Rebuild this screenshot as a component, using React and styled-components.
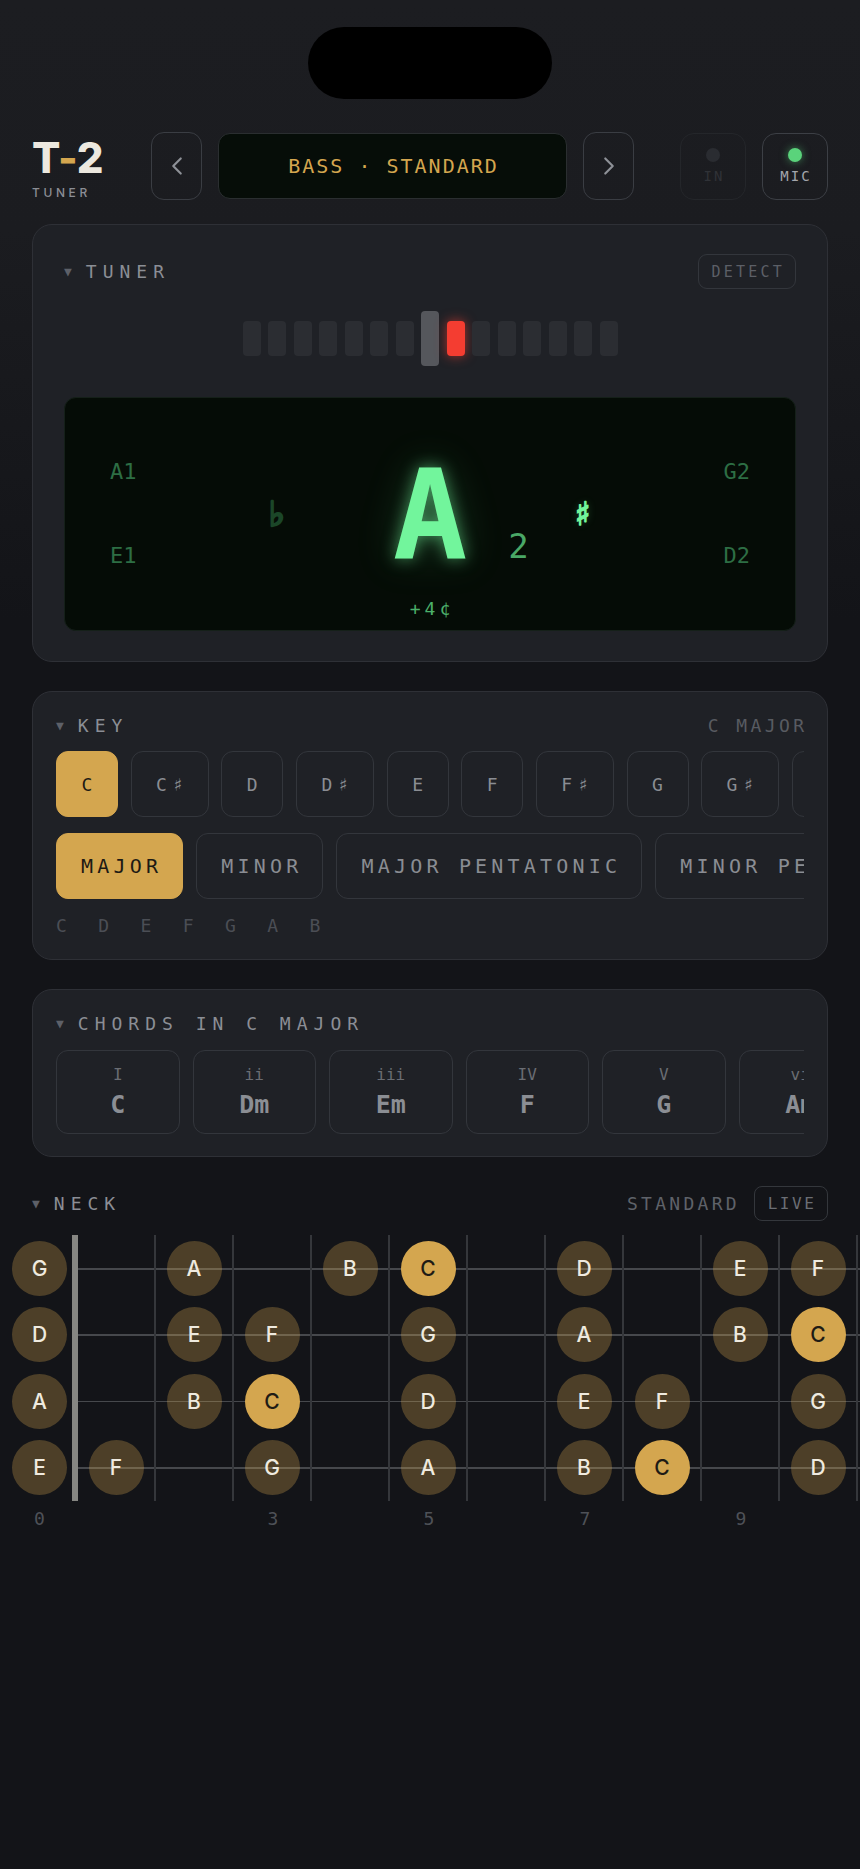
import React from 'react';
import styled, { createGlobalStyle } from 'styled-components';
import { ChevronLeft, ChevronRight } from 'lucide-react';

const MONO = '"DejaVu Sans Mono", "Liberation Mono", monospace';
const SANS = 'Inter, "Noto Sans", sans-serif';
const SYMBOL = '"DejaVu Sans", "Noto Sans", sans-serif';
const GOLD = '#d4a64f';

const GlobalStyle = createGlobalStyle`
  html, body { margin: 0; padding: 0; background: #131418; }
  * { box-sizing: border-box; }
  body { font-family: ${MONO}; color: #8b8e95; }
`;

const Page = styled.div`
  width: 860px;
  min-height: 1869px;
  padding-top: 27px;
  overflow: hidden;
  background: linear-gradient(180deg, #1c1d21 0px, #1b1c20 230px, #131418 620px, #131418 100%);
`;

const Notch = styled.div`
  width: 244px;
  height: 72px;
  margin: 0 auto;
  border-radius: 36px;
  background: #000;
`;

const Header = styled.header`
  display: flex;
  align-items: center;
  height: 68px;
  margin-top: 33px;
  padding: 0 32px;
`;

const Logo = styled.div`
  flex: 0 0 119px;
  display: flex;
  flex-direction: column;
  margin-top: 4px;
`;

const LogoMark = styled.div`
  font-family: ${SANS};
  font-weight: 800;
  font-size: 42px;
  line-height: 42px;
  color: #ece8df;
  letter-spacing: -0.5px;
`;

const LogoDash = styled.span`
  color: ${GOLD};
`;

const LogoSub = styled.div`
  margin-top: 7px;
  font-family: ${SANS};
  font-weight: 500;
  font-size: 12px;
  line-height: 14px;
  letter-spacing: 3.6px;
  color: #8b8e95;
`;

const NavGroup = styled.div`
  flex: 1;
  display: flex;
  align-items: center;
  gap: 16px;
`;

const NavButton = styled.button`
  flex: 0 0 51px;
  height: 68px;
  display: flex;
  align-items: center;
  justify-content: center;
  background: transparent;
  border: 1.5px solid #3a3d43;
  border-radius: 13px;
  color: #8e9197;
  padding: 0;
`;

const PresetDisplay = styled.div`
  flex: 1;
  height: 66px;
  display: flex;
  align-items: center;
  justify-content: center;
  padding-left: 2px;
  background: #060d08;
  border: 1px solid #2a2e30;
  border-radius: 12px;
  font-size: 20px;
  letter-spacing: 2px;
  color: ${GOLD};
`;

const InputGroup = styled.div`
  margin-left: 46px;
  display: flex;
  gap: 16px;
`;

const InputButton = styled.div`
  width: 66px;
  height: 67px;
  display: flex;
  flex-direction: column;
  align-items: center;
  justify-content: center;
  gap: 6px;
  border-radius: 14px;
  border: 1.5px solid ${(p) => (p.$active ? '#3c3f45' : '#24262a')};
`;

const Led = styled.span`
  width: 14px;
  height: 14px;
  border-radius: 50%;
  background: ${(p) => (p.$active ? '#5ad37b' : '#2a2c31')};
  box-shadow: ${(p) => (p.$active ? '0 0 9px rgba(90, 211, 123, 0.55)' : 'none')};
`;

const InputLabel = styled.span`
  font-size: 14px;
  line-height: 16px;
  letter-spacing: 2px;
  padding-left: 2px;
  color: ${(p) => (p.$active ? '#a3a6ac' : '#303237')};
`;

const Stack = styled.main`
  margin-top: 24px;
  padding: 0 32px;
  display: flex;
  flex-direction: column;
  gap: 29px;
`;

const Card = styled.section`
  background: #1f2126;
  border: 1px solid #2e3036;
  border-radius: 20px;
  padding: ${(p) => p.$pad};
`;

const CardHeader = styled.div`
  display: flex;
  align-items: center;
  justify-content: space-between;
  min-height: ${(p) => p.$h || 22}px;
`;

const Title = styled.div`
  display: flex;
  align-items: center;
  gap: ${(p) => p.$gap || 14}px;
  font-size: 18px;
  line-height: 22px;
  letter-spacing: 6px;
  color: #8b8e95;
`;

const Caret = styled.span`
  font-size: 13px;
  letter-spacing: 0;
  color: #5d6068;
`;

const DetectButton = styled.div`
  height: 35px;
  display: flex;
  align-items: center;
  padding: 0 10px 0 13px;
  border: 1.5px solid #33363c;
  border-radius: 9px;
  font-size: 15px;
  letter-spacing: 3.2px;
  color: #5c5f66;
`;

const Meter = styled.div`
  height: 55px;
  margin-top: 22px;
  display: flex;
  align-items: center;
  justify-content: center;
  gap: 7.5px;
`;

const MeterBar = styled.span`
  width: 18px;
  height: ${(p) => (p.$kind === 'center' ? 55 : 35)}px;
  border-radius: 4px;
  background: ${(p) => (p.$kind === 'center' ? '#55575c' : p.$kind === 'hit' ? '#f43d31' : '#2b2d32')};
  box-shadow: ${(p) => (p.$kind === 'hit' ? '0 0 12px rgba(244, 61, 49, 0.65)' : 'none')};
`;

const Readout = styled.div`
  margin-top: 31px;
  height: 234px;
  display: grid;
  grid-template-columns: 1fr auto 1fr;
  padding: 0 45px;
  background: #050c06;
  border: 1px solid #152019;
  border-radius: 12px;
`;

const Side = styled.div`
  display: flex;
  align-items: center;
`;

const StringStack = styled.div`
  display: flex;
  flex-direction: column;
  gap: 62px;
  font-size: 22px;
  line-height: 22px;
  color: #2d6e44;
  margin-left: ${(p) => (p.$right ? 'auto' : '0')};
`;

const Flat = styled.span`
  margin-left: auto;
  margin-right: 108px;
  font-family: ${SYMBOL};
  font-size: 34px;
  line-height: 34px;
  font-weight: bold;
  color: #1b4628;
  -webkit-text-stroke: 2.4px #1b4628;
`;

const NoteColumn = styled.div`
  display: grid;
  grid-template-rows: 1fr auto 1fr;
  justify-items: center;
`;

const BigNote = styled.div`
  grid-row: 2;
  padding-top: 4px;
  font-size: 124px;
  line-height: 124px;
  font-weight: bold;
  color: #72f59c;
  text-shadow: 0 0 16px rgba(114, 245, 156, 0.55), 0 0 44px rgba(114, 245, 156, 0.22);
`;

const Cents = styled.div`
  grid-row: 3;
  align-self: end;
  margin-bottom: 10px;
  padding-left: 4px;
  font-size: 18px;
  line-height: 22px;
  letter-spacing: 4px;
  color: #4caf6a;
`;

const Octave = styled.span`
  align-self: flex-end;
  margin-bottom: 67px;
  margin-left: 41px;
  font-size: 34px;
  line-height: 34px;
  color: #4aa866;
`;

const Sharp = styled.span`
  margin-left: 46px;
  font-family: ${SYMBOL};
  font-size: 32px;
  line-height: 32px;
  font-weight: bold;
  color: #72f59c;
  -webkit-text-stroke: 1.6px #72f59c;
  text-shadow: 0 0 8px rgba(114, 245, 156, 0.4);
`;

const HeaderValue = styled.span`
  font-size: 18px;
  line-height: 22px;
  letter-spacing: 3.4px;
  margin-right: -3.4px;
  color: #585b61;
`;

const ChipRow = styled.div`
  display: flex;
  gap: ${(p) => p.$gap}px;
  margin-top: ${(p) => p.$top}px;
  overflow: hidden;
`;

const Chip = styled.div`
  flex-shrink: 0;
  height: 66px;
  display: flex;
  align-items: center;
  white-space: nowrap;
  border-radius: 12px;
  border: 1px solid ${(p) => (p.$on ? GOLD : '#33363c')};
  background: ${(p) => (p.$on ? GOLD : 'transparent')};
  color: ${(p) => (p.$on ? '#1d1a14' : '#8a8d93')};
`;

const KeyChip = styled(Chip)`
  padding: 0 19.3px 0 24.5px;
  font-size: 18px;
  letter-spacing: 5.4px;
`;

const ModeChip = styled(Chip)`
  padding: 0 20px 0 24px;
  font-size: 20px;
  letter-spacing: 4.2px;
`;

const ScaleNotes = styled.div`
  margin-top: 16px;
  display: flex;
  gap: 31.4px;
  font-size: 18px;
  line-height: 22px;
  color: #4b4e55;
`;

const ChordCard = styled.div`
  flex: 0 0 123.5px;
  height: 84px;
  display: flex;
  flex-direction: column;
  align-items: center;
  justify-content: center;
  gap: 5px;
  border: 1px solid #33363c;
  border-radius: 12px;
`;

const Numeral = styled.span`
  font-size: 16px;
  line-height: 20px;
  color: #6a6d73;
`;

const ChordName = styled.span`
  font-size: 25px;
  line-height: 30px;
  font-weight: bold;
  color: #8b8e94;
  white-space: nowrap;
`;

const NeckSection = styled.section`
  margin-top: 29px;
`;

const NeckHeader = styled.div`
  height: 35px;
  padding: 0 32px;
  display: flex;
  align-items: center;
  justify-content: space-between;
`;

const NeckMeta = styled.div`
  display: flex;
  align-items: center;
  gap: 14px;
`;

const TuningLabel = styled.span`
  font-size: 18px;
  line-height: 22px;
  letter-spacing: 3.3px;
  color: #5f6269;
`;

const LiveBadge = styled.span`
  width: 74px;
  height: 35px;
  display: flex;
  align-items: center;
  justify-content: center;
  padding-left: 2px;
  border: 1.5px solid #34373c;
  border-radius: 8px;
  font-size: 16px;
  letter-spacing: 2.5px;
  color: #6b6e74;
`;

const BoardWrap = styled.div`
  margin-top: 14px;
  padding-left: 12px;
  overflow: hidden;
`;

const Board = styled.div`
  display: grid;
  grid-template-columns: 60px 6px repeat(12, 78px);
  grid-template-rows: repeat(4, 66.5px) auto;
`;

const OpenCell = styled.div`
  display: flex;
  align-items: center;
  justify-content: flex-start;
`;

const Nut = styled.div`
  grid-column: 2;
  grid-row: 1 / span 4;
  background: #868682;
`;

const FretCell = styled.div`
  display: flex;
  align-items: center;
  justify-content: center;
  border-right: 2px solid #35373b;
  background: linear-gradient(
    to bottom,
    transparent calc(50% - 1px),
    #46484c calc(50% - 1px),
    #46484c calc(50% + 1px),
    transparent calc(50% + 1px)
  );
`;

const NoteDot = styled.div`
  width: 55px;
  height: 55px;
  flex-shrink: 0;
  border-radius: 50%;
  display: flex;
  align-items: center;
  justify-content: center;
  background: ${(p) => (p.$root ? GOLD : 'rgba(212, 166, 79, 0.3)')};
  color: ${(p) => (p.$root ? '#1e1b15' : '#efeadf')};
  font-family: ${SANS};
  font-weight: 500;
  font-size: 21px;
`;

const FretNumber = styled.div`
  width: ${(p) => (p.$open ? '55px' : 'auto')};
  padding-top: 7px;
  text-align: center;
  font-size: 18px;
  line-height: 22px;
  color: #4e5157;
`;

const NOTES = ['C', 'C♯', 'D', 'D♯', 'E', 'F', 'F♯', 'G', 'G♯', 'A', 'A♯', 'B'];
const SCALE = [0, 2, 4, 5, 7, 9, 11];
const STRINGS = [7, 2, 9, 4];
const MODES = ['MAJOR', 'MINOR', 'MAJOR PENTATONIC', 'MINOR PENTATONIC', 'BLUES'];
const CHORDS = [
  ['I', 'C'],
  ['ii', 'Dm'],
  ['iii', 'Em'],
  ['IV', 'F'],
  ['V', 'G'],
  ['vi', 'Am'],
  ['vii°', 'B°'],
];
const MARKED = [3, 5, 7, 9, 12];

const meterKinds = Array.from({ length: 15 }, (_, i) => (i === 7 ? 'center' : i === 8 ? 'hit' : 'off'));

function Dot({ semitone }) {
  if (!SCALE.includes(semitone)) return null;
  return <NoteDot $root={semitone === 0}>{NOTES[semitone]}</NoteDot>;
}

export default function App() {
  return (
    <>
      <GlobalStyle />
      <Page>
        <Notch />
        <Header>
          <Logo>
            <LogoMark>
              T<LogoDash>-</LogoDash>2
            </LogoMark>
            <LogoSub>TUNER</LogoSub>
          </Logo>
          <NavGroup>
            <NavButton>
              <ChevronLeft size={30} strokeWidth={1.7} />
            </NavButton>
            <PresetDisplay>BASS · STANDARD</PresetDisplay>
            <NavButton>
              <ChevronRight size={30} strokeWidth={1.7} />
            </NavButton>
          </NavGroup>
          <InputGroup>
            <InputButton>
              <Led />
              <InputLabel>IN</InputLabel>
            </InputButton>
            <InputButton $active>
              <Led $active />
              <InputLabel $active>MIC</InputLabel>
            </InputButton>
          </InputGroup>
        </Header>

        <Stack>
          <Card $pad="29px 31px 30px">
            <CardHeader $h={35}>
              <Title $gap={14}>
                <Caret>▼</Caret>TUNER
              </Title>
              <DetectButton>DETECT</DetectButton>
            </CardHeader>
            <Meter>
              {meterKinds.map((k, i) => (
                <MeterBar key={i} $kind={k} />
              ))}
            </Meter>
            <Readout>
              <Side>
                <StringStack>
                  <span>A1</span>
                  <span>E1</span>
                </StringStack>
                <Flat>♭</Flat>
              </Side>
              <NoteColumn>
                <BigNote>A</BigNote>
                <Cents>+4¢</Cents>
              </NoteColumn>
              <Side>
                <Octave>2</Octave>
                <Sharp>♯</Sharp>
                <StringStack $right>
                  <span>G2</span>
                  <span>D2</span>
                </StringStack>
              </Side>
            </Readout>
          </Card>

          <Card $pad="23px 23px 22px">
            <CardHeader>
              <Title>
                <Caret>▼</Caret>KEY
              </Title>
              <HeaderValue>C MAJOR</HeaderValue>
            </CardHeader>
            <ChipRow $gap={12.5} $top={14}>
              {NOTES.map((n, i) => (
                <KeyChip key={n} $on={i === 0}>
                  {n}
                </KeyChip>
              ))}
            </ChipRow>
            <ChipRow $gap={13} $top={16}>
              {MODES.map((m, i) => (
                <ModeChip key={m} $on={i === 0}>
                  {m}
                </ModeChip>
              ))}
            </ChipRow>
            <ScaleNotes>
              {SCALE.map((s) => (
                <span key={s}>{NOTES[s]}</span>
              ))}
            </ScaleNotes>
          </Card>

          <Card $pad="23px 23px 22px">
            <CardHeader>
              <Title>
                <Caret>▼</Caret>CHORDS IN C MAJOR
              </Title>
            </CardHeader>
            <ChipRow $gap={13} $top={15}>
              {CHORDS.map(([num, name]) => (
                <ChordCard key={num}>
                  <Numeral>{num}</Numeral>
                  <ChordName>{name}</ChordName>
                </ChordCard>
              ))}
            </ChipRow>
          </Card>
        </Stack>

        <NeckSection>
          <NeckHeader>
            <Title>
              <Caret>▼</Caret>NECK
            </Title>
            <NeckMeta>
              <TuningLabel>STANDARD</TuningLabel>
              <LiveBadge>LIVE</LiveBadge>
            </NeckMeta>
          </NeckHeader>
          <BoardWrap>
            <Board>
              <Nut />
              {STRINGS.map((open) => (
                <React.Fragment key={open}>
                  <OpenCell>
                    <Dot semitone={open} />
                  </OpenCell>
                  {Array.from({ length: 12 }, (_, f) => (
                    <FretCell key={f}>
                      <Dot semitone={(open + f + 1) % 12} />
                    </FretCell>
                  ))}
                </React.Fragment>
              ))}
              <FretNumber $open>0</FretNumber>
              <div />
              {Array.from({ length: 12 }, (_, f) => (
                <FretNumber key={f}>{MARKED.includes(f + 1) ? f + 1 : ''}</FretNumber>
              ))}
            </Board>
          </BoardWrap>
        </NeckSection>
      </Page>
    </>
  );
}
